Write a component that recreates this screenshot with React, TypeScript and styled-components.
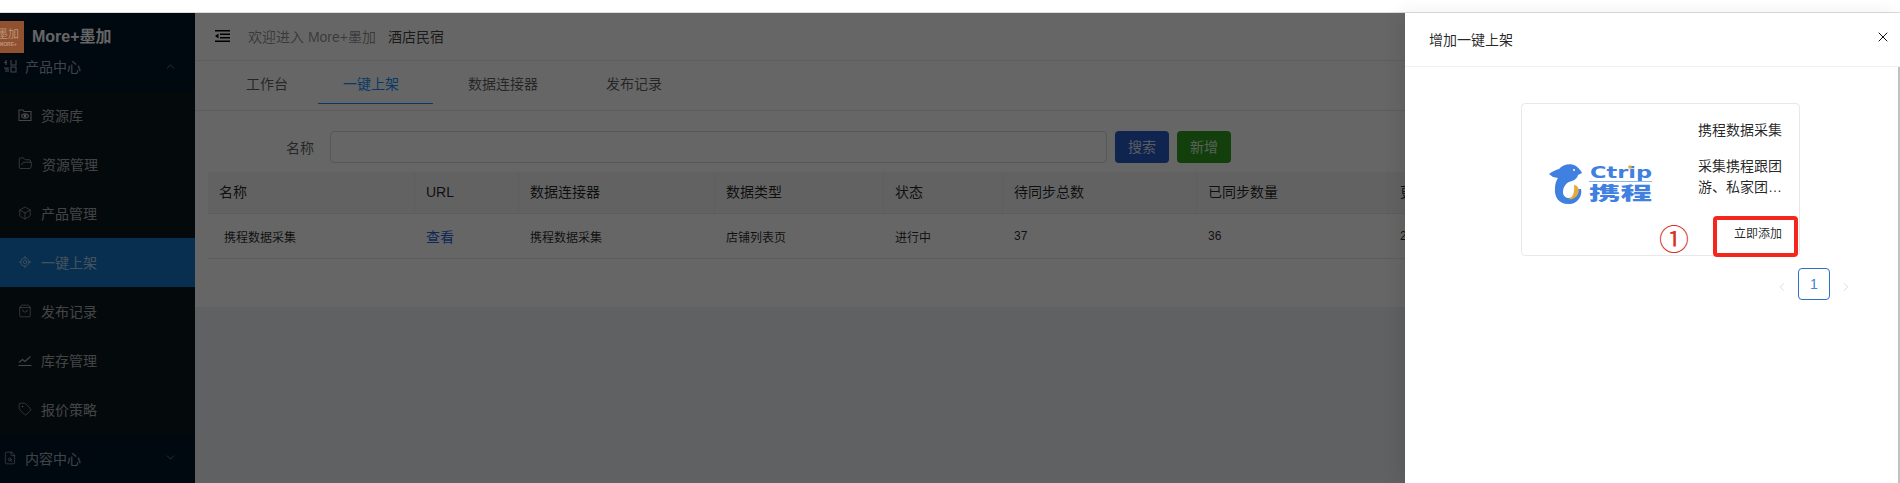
import React from 'react';
import styled, { createGlobalStyle } from 'styled-components';
import { Box, ChevronDown, ChevronLeft, ChevronRight, ChevronUp, FileSearch, FolderOpen, LocateFixed, ShoppingBag, Tag, X } from 'lucide-react';

const GlobalStyle = createGlobalStyle`
  html, body {
    margin: 0;
    padding: 0;
    background: #fff;
    font-family: "Liberation Sans", "Noto Sans CJK SC", sans-serif;
  }
`;

const COLUMNS = '207px 104px 196px 169px 119px 194px 192px 300px';

const FolderEye = () => (
  <svg width="14" height="14" viewBox="0 0 14 14" fill="none" stroke="currentColor" strokeWidth="1.100">
    <path d="M1 12.500V2h4l1 1.500h7v9z" />
    <ellipse cx="7" cy="8" rx="3.400" ry="2.100" />
    <circle cx="7" cy="8" r=".9" fill="currentColor" />
  </svg>
);

const StockLine = () => (
  <svg width="14" height="14" viewBox="0 0 14 14" fill="none" stroke="currentColor" strokeWidth="1.100">
    <path d="M.5 12.500h13" />
    <path d="M1 9.500l3.500-3 2.500 2L12.500 3.500" />
  </svg>
);

const ProductGrid = () => (
  <svg width="14" height="14" viewBox="0 0 14 14" fill="none" stroke="currentColor" strokeWidth="1.100">
    <path d="M3 1v5M1 3.500h3M1 9h4v4M3 9v4M8 1v5h5V1M8 8h5v5H8z" />
  </svg>
);

const FoldIcon = () => (
  <svg width="16" height="12" viewBox="0 0 16 12" fill="#000">
    <rect x="0" y="0" width="15" height="1.500" />
    <rect x="5" y="3.500" width="10" height="1.500" />
    <rect x="5" y="7" width="10" height="1.500" />
    <rect x="0" y="10.500" width="15" height="1.500" />
    <path d="M3.500 3.500v5L0 6z" />
  </svg>
);

const CtripLogo = () => (
  <svg width="115" height="50" viewBox="0 0 115 50">
    <path
      fill="#3f80e0"
      d="M4 14C8 11 11 10 14 9C18 4 26 3 31 6C34 8 36 11 37 13L33 15C32 19 28 21 24 22C20 24 18 28 18 32C18 36 21 38 24 38C28 38 31 35 32 29L36 29C38 37 31 45 23 44C14 44 9 37 10 28C10 24 11 21 13 18L8 17Z"
    />
    <path fill="#e8a93c" d="M29 25C33 25 35 30 33 34C31 38 27 40 23 39C27 38 30 34 29 25Z" />
    <circle cx="29" cy="10" r="1" fill="#fff" />
    <text x="45" y="18" fontFamily="DejaVu Sans" fontWeight="700" fontSize="15" fill="#3f80e0" textLength="62" lengthAdjust="spacingAndGlyphs">Ctrip</text>
    <circle cx="85" cy="7" r="1.800" fill="#e8a93c" />
    <rect x="44" y="21" width="63" height="1" fill="#8db4ec" />
    <text x="44" y="40" fontFamily="Noto Sans CJK SC" fontWeight="900" fontSize="18" fill="#3f80e0" textLength="63" lengthAdjust="spacingAndGlyphs">携程</text>
  </svg>
);

const subItems = [
  { label: '资源库', icon: <FolderEye /> },
  { label: '资源管理', icon: <FolderOpen size={15} strokeWidth={1.200} /> },
  { label: '产品管理', icon: <Box size={14} strokeWidth={1.200} /> },
  { label: '一键上架', icon: <LocateFixed size={14} strokeWidth={1.300} />, active: true },
  { label: '发布记录', icon: <ShoppingBag size={14} strokeWidth={1.200} /> },
  { label: '库存管理', icon: <StockLine /> },
  { label: '报价策略', icon: <Tag size={14} strokeWidth={1.200} /> },
];

const tabs = [
  { label: '工作台', left: 30, right: 30 },
  { label: '一键上架', left: 25, right: 34, active: true },
  { label: '数据连接器', left: 35, right: 34 },
  { label: '发布记录', left: 34, right: 34 },
];

const headers = ['名称', 'URL', '数据连接器', '数据类型', '状态', '待同步总数', '已同步数量', '更新时间'];

export default function App() {
  return (
    <Page>
      <GlobalStyle />
      <TopStrip />
      <Body>
        <Sidebar>
          <Brand>
            <BrandMark>
              <span>墨加</span>
              <small>MORE+</small>
            </BrandMark>
            <BrandName>More+墨加</BrandName>
          </Brand>
          <MenuTitle $height={48}>
            <ProductGrid />
            <span>产品中心</span>
            <ChevronUp size={13} strokeWidth={1.200} />
          </MenuTitle>
          <SubMenu>
            {subItems.map((item) => (
              <SubItem key={item.label} $active={item.active}>
                {item.icon}
                <span>{item.label}</span>
              </SubItem>
            ))}
          </SubMenu>
          <MenuTitle $height={49}>
            <FileSearch size={14} strokeWidth={1.200} />
            <span>内容中心</span>
            <ChevronDown size={13} strokeWidth={1.200} />
          </MenuTitle>
        </Sidebar>
        <Main>
          <Header>
            <FoldIcon />
            <Welcome>欢迎进入 More+墨加</Welcome>
            <Shop>酒店民宿</Shop>
          </Header>
          <Tabs>
            {tabs.map((tab) => (
              <Tab key={tab.label} $left={tab.left} $right={tab.right} $active={tab.active}>
                {tab.label}
              </Tab>
            ))}
          </Tabs>
          <Content>
            <SearchRow>
              <SearchLabel>名称</SearchLabel>
              <SearchInput />
              <ActionButton $color="#265ac4">搜索</ActionButton>
              <ActionButton $color="#2f9e1f">新增</ActionButton>
            </SearchRow>
            <TableHead>
              {headers.map((h) => (
                <HeadCell key={h}>{h}</HeadCell>
              ))}
            </TableHead>
            <TableRow>
              <RowCell $inset>携程数据采集</RowCell>
              <RowLink>查看</RowLink>
              <RowCell>携程数据采集</RowCell>
              <RowCell>店铺列表页</RowCell>
              <RowCell>进行中</RowCell>
              <RowCell>37</RowCell>
              <RowCell>36</RowCell>
              <RowCell>2023-01-01</RowCell>
            </TableRow>
          </Content>
        </Main>
        <Mask />
        <Drawer>
          <DrawerHeader>
            <DrawerTitle>增加一键上架</DrawerTitle>
            <X size={16} strokeWidth={1.500} color="#111" />
          </DrawerHeader>
          <DrawerBody>
            <Card>
              <LogoSlot>
                <CtripLogo />
              </LogoSlot>
              <CardText>
                <CardTitle>携程数据采集</CardTitle>
                <CardDesc>采集携程跟团游、私家团游等产品数据</CardDesc>
                <CardAction>立即添加</CardAction>
              </CardText>
              <StepNumber>①</StepNumber>
              <RedFrame />
            </Card>
            <Pagination>
              <PageArrow>
                <ChevronLeft size={14} strokeWidth={1.200} />
              </PageArrow>
              <PageNumber>1</PageNumber>
              <PageArrow>
                <ChevronRight size={14} strokeWidth={1.200} />
              </PageArrow>
            </Pagination>
          </DrawerBody>
        </Drawer>
      </Body>
    </Page>
  );
}

const Page = styled.div`
  width: 1900px;
  height: 483px;
  display: flex;
  flex-direction: column;
  overflow: hidden;
`;

const TopStrip = styled.div`
  height: 12px;
  flex: none;
  background: #fff;
  border-bottom: 1px solid #dcdcdc;
`;

const Body = styled.div`
  flex: 1;
  display: flex;
  position: relative;
  min-height: 0;
  background: #f0f2f5;
`;

const Sidebar = styled.div`
  width: 195px;
  flex: none;
  background: #001529;
  color: rgba(255, 255, 255, 0.65);
  font-size: 14px;
`;

const Brand = styled.div`
  height: 42px;
  margin-bottom: -12px;
  padding-top: 8px;
  box-sizing: border-box;
  display: flex;
  gap: 8px;
  position: relative;
`;

const BrandMark = styled.div`
  width: 32px;
  height: 32px;
  margin-left: -8px;
  flex: none;
  position: relative;
  z-index: 3;
  background: #8f5130;
  color: #bd957c;
  display: flex;
  flex-direction: column;
  align-items: center;
  font-size: 11px;
  line-height: 14px;
  padding-top: 6px;
  box-sizing: border-box;

  small {
    font-size: 5px;
    line-height: 7px;
    font-weight: 700;
  }
`;

const BrandName = styled.div`
  font-size: 16px;
  font-weight: 700;
  line-height: 32px;
  color: #fff;
`;

const MenuTitle = styled.div<{ $height: number }>`
  height: ${(p) => p.$height}px;
  padding: 0 18px 2px 3px;
  box-sizing: border-box;
  display: flex;
  align-items: center;
  gap: 8px;

  span {
    flex: 1;
  }
`;

const SubMenu = styled.div`
  background: #0c1720;
`;

const SubItem = styled.div<{ $active?: boolean }>`
  height: 49px;
  padding: 0 0 2px 18px;
  box-sizing: border-box;
  display: flex;
  align-items: center;
  gap: 9px;
  background: ${(p) => (p.$active ? '#1677c9' : 'transparent')};
  color: rgba(255, 255, 255, 0.65);
`;

const Main = styled.div`
  flex: 1;
  min-width: 0;
`;

const Header = styled.div`
  height: 47px;
  padding: 0 0 2px 20px;
  box-sizing: content-box;
  height: 45px;
  background: #fff;
  border-bottom: 1px solid #e8e8e8;
  display: flex;
  align-items: center;
  font-size: 14px;
`;

const Welcome = styled.span`
  margin-left: 17px;
  color: rgba(0, 0, 0, 0.45);
`;

const Shop = styled.span`
  margin-left: 12px;
  color: rgba(0, 0, 0, 0.75);
`;

const Tabs = styled.div`
  height: 49px;
  padding-left: 21px;
  background: #fff;
  border-bottom: 1px solid #e8e8e8;
  display: flex;
  font-size: 14px;
  color: rgba(0, 0, 0, 0.65);
`;

const Tab = styled.div<{ $left: number; $right: number; $active?: boolean }>`
  height: 43px;
  box-sizing: border-box;
  line-height: 47px;
  padding: 0 ${(p) => p.$right}px 0 ${(p) => p.$left}px;
  color: ${(p) => (p.$active ? '#1890ff' : 'inherit')};
  border-bottom: ${(p) => (p.$active ? '1px solid #1890ff' : '0')};
`;

const Content = styled.div`
  height: 196px;
  padding: 20px 0 0 13px;
  box-sizing: border-box;
  background: #fff;
`;

const SearchRow = styled.div`
  display: flex;
  align-items: center;
  gap: 8px;
  height: 32px;
  font-size: 14px;
`;

const SearchLabel = styled.div`
  width: 106px;
  margin-right: 8px;
  text-align: right;
  color: rgba(0, 0, 0, 0.65);
`;

const SearchInput = styled.div`
  width: 777px;
  height: 32px;
  box-sizing: border-box;
  border: 1px solid #d9d9d9;
  border-radius: 4px;
`;

const ActionButton = styled.div<{ $color: string }>`
  width: 54px;
  height: 32px;
  border-radius: 4px;
  background: ${(p) => p.$color};
  color: rgba(255, 255, 255, 0.85);
  text-align: center;
  line-height: 32px;
`;

const TableHead = styled.div`
  margin-top: 9px;
  height: 41px;
  display: grid;
  grid-template-columns: ${COLUMNS};
  background: #f5f5f5;
  border-bottom: 1px solid #e8e8e8;
  font-size: 14px;
  color: rgba(0, 0, 0, 0.85);
`;

const HeadCell = styled.div`
  padding-left: 11px;
  line-height: 41px;
  border-right: 1px solid #ececec;
  white-space: nowrap;
`;

const TableRow = styled.div`
  height: 44px;
  display: grid;
  grid-template-columns: ${COLUMNS};
  align-items: center;
  border-bottom: 1px solid #e8e8e8;
  font-size: 12px;
  color: rgba(0, 0, 0, 0.85);
`;

const RowCell = styled.div<{ $inset?: boolean }>`
  padding-left: ${(p) => (p.$inset ? '16px' : '11px')};
`;

const RowLink = styled.div`
  padding-left: 11px;
  font-size: 14px;
  color: #2a62d8;
`;

const Mask = styled.div`
  position: absolute;
  inset: 0;
  z-index: 1;
  background: rgba(0, 0, 0, 0.6);
`;

const Drawer = styled.div`
  position: absolute;
  top: 0;
  right: 0;
  bottom: 0;
  width: 495px;
  z-index: 2;
  background: #fff;
  box-shadow: -6px 0 16px rgba(0, 0, 0, 0.08);
  display: flex;
  flex-direction: column;
`;

const DrawerHeader = styled.div`
  height: 54px;
  flex: none;
  padding: 0 9px 5px 24px;
  box-sizing: border-box;
  border-bottom: 1px solid #f0f0f0;
  display: flex;
  align-items: center;
  justify-content: space-between;
`;

const DrawerTitle = styled.div`
  font-size: 14px;
  color: rgba(0, 0, 0, 0.85);
  padding-top: 4px;
`;

const DrawerBody = styled.div`
  flex: 1;
  position: relative;
  padding: 36px 0 0 116px;

  &::after {
    content: '';
    position: absolute;
    top: 0;
    right: 0;
    bottom: 0;
    width: 2px;
    background: #c1c1c1;
  }
`;

const Card = styled.div`
  width: 279px;
  height: 153px;
  box-sizing: border-box;
  border: 1px solid #e8e8e8;
  border-radius: 4px;
  position: relative;
  display: flex;
  color: rgba(0, 0, 0, 0.85);
`;

const LogoSlot = styled.div`
  width: 176px;
  padding: 56px 0 0 23px;
  box-sizing: border-box;
`;

const CardText = styled.div`
  width: 84px;
  font-size: 14px;
  padding-top: 15px;
`;

const CardTitle = styled.div`
  line-height: 22px;
  white-space: nowrap;
`;

const CardDesc = styled.div`
  margin-top: 15px;
  line-height: 21px;
  display: -webkit-box;
  -webkit-box-orient: vertical;
  -webkit-line-clamp: 2;
  overflow: hidden;
`;

const CardAction = styled.div`
  margin-top: 27px;
  font-size: 12px;
  line-height: 18px;
  white-space: nowrap;
  text-align: right;
`;

const StepNumber = styled.div`
  position: absolute;
  left: 137px;
  top: 118px;
  font-size: 30px;
  line-height: 36px;
  color: #d93025;
`;

const RedFrame = styled.div`
  position: absolute;
  left: 191px;
  top: 112px;
  width: 85px;
  height: 41px;
  box-sizing: border-box;
  border: 4px solid #f5261b;
  border-radius: 4px;
`;

const Pagination = styled.div`
  margin: 12px 0 0 253px;
  display: flex;
  gap: 8px;
`;

const PageArrow = styled.div`
  width: 16px;
  height: 32px;
  padding-top: 6px;
  box-sizing: border-box;
  display: flex;
  align-items: center;
  justify-content: center;
  color: #cfcfcf;
`;

const PageNumber = styled.div`
  width: 32px;
  height: 32px;
  box-sizing: border-box;
  border: 1px solid #2f6fc4;
  border-radius: 4px;
  text-align: center;
  line-height: 30px;
  font-size: 14px;
  color: #3f80e0;
`;
